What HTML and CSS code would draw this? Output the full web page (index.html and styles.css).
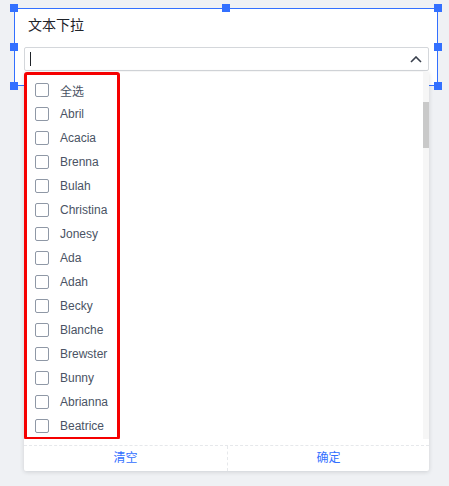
FILE: index.html
```html
<!DOCTYPE html>
<html lang="zh">
<head>
<meta charset="utf-8">
<link rel="stylesheet" href="styles.css">
</head>
<body>
<div class="stage">
  <div class="card">
    <div class="selection">
      <span class="handle h-tl"></span>
      <span class="handle h-tm"></span>
      <span class="handle h-tr"></span>
      <span class="handle h-ml"></span>
      <span class="handle h-mr"></span>
      <span class="handle h-bl"></span>
      <span class="handle h-br"></span>
    </div>
    <div class="title">文本下拉</div>
    <div class="select">
      <div class="input">
        <span class="caret"></span>
        <svg class="chevron" width="12" height="7" viewBox="0 0 12 7"><path d="M1 6 L6 1 L11 6" fill="none" stroke="#39404d" stroke-width="1.6"/></svg>
      </div>
      <div class="dropdown">
        <div class="list">
          <div class="row"><span class="box"></span><span class="label">全选</span></div>
          <div class="row"><span class="box"></span><span class="label">Abril</span></div>
          <div class="row"><span class="box"></span><span class="label">Acacia</span></div>
          <div class="row"><span class="box"></span><span class="label">Brenna</span></div>
          <div class="row"><span class="box"></span><span class="label">Bulah</span></div>
          <div class="row"><span class="box"></span><span class="label">Christina</span></div>
          <div class="row"><span class="box"></span><span class="label">Jonesy</span></div>
          <div class="row"><span class="box"></span><span class="label">Ada</span></div>
          <div class="row"><span class="box"></span><span class="label">Adah</span></div>
          <div class="row"><span class="box"></span><span class="label">Becky</span></div>
          <div class="row"><span class="box"></span><span class="label">Blanche</span></div>
          <div class="row"><span class="box"></span><span class="label">Brewster</span></div>
          <div class="row"><span class="box"></span><span class="label">Bunny</span></div>
          <div class="row"><span class="box"></span><span class="label">Abrianna</span></div>
          <div class="row"><span class="box"></span><span class="label">Beatrice</span></div>
          <div class="highlight"></div>
          <div class="scrollbar"><div class="thumb"></div></div>
        </div>
        <div class="footer">
          <div class="btn">清空</div>
          <div class="btn btn-right">确定</div>
        </div>
      </div>
    </div>
  </div>
</div>
</body>
</html>
```

FILE: styles.css
```css
html, body {
  margin: 0;
  padding: 0;
}
body {
  width: 449px;
  height: 486px;
  background: #eff1f4;
  font-family: "Liberation Sans", Arial, "Noto Sans CJK SC", sans-serif;
  overflow: hidden;
}
.stage {
  padding: 8px 0 0 14px;
}
.card {
  position: relative;
  width: 423px;
  height: 77px;
  background: #ffffff;
  box-sizing: border-box;
}
.selection {
  position: absolute;
  left: 0;
  top: 0;
  width: 424px;
  height: 78px;
  border: 1px solid #3370ff;
  box-sizing: border-box;
  z-index: 1;
}
.handle {
  position: absolute;
  width: 8px;
  height: 8px;
  background: #3370ff;
}
.h-tl { left: -5px; top: -5px; }
.h-tm { left: 207px; top: -5px; }
.h-tr { right: -5px; top: -5px; }
.h-ml { left: -5px; top: 34px; }
.h-mr { right: -5px; top: 34px; }
.h-bl { left: -5px; bottom: -5px; }
.h-br { right: -5px; bottom: -5px; }
.title {
  padding: 7px 0 0 14px;
  font-size: 14px;
  line-height: 20px;
  color: #1f2329;
  height: 20px;
}
.select {
  position: relative;
  margin: 12px 0 0 10px;
  width: 405px;
}
.input {
  position: relative;
  height: 24px;
  border: 1px solid #d4d7db;
  border-radius: 2px;
  box-sizing: border-box;
  background: #fff;
  display: flex;
  align-items: center;
  justify-content: space-between;
  padding: 0 6px 0 5px;
}
.caret {
  width: 1px;
  height: 14px;
  background: #1f2329;
}
.chevron {
  display: block;
  margin-top: 1px;
}
.dropdown {
  position: absolute;
  left: 0;
  top: 25px;
  width: 405px;
  height: 399px;
  background: #ffffff;
  border-radius: 2px;
  box-shadow: 0 1px 4px rgba(31, 35, 41, 0.16);
  z-index: 2;
  display: flex;
  flex-direction: column;
}
.list {
  position: relative;
  height: 368px;
  padding: 6px 0 0 11px;
  box-sizing: border-box;
  overflow: hidden;
}
.row {
  height: 24px;
  display: flex;
  align-items: center;
}
.box {
  width: 14px;
  height: 14px;
  border: 1px solid #8f98a6;
  border-radius: 2px;
  box-sizing: border-box;
  margin-right: 11px;
  flex: none;
}
.label {
  font-size: 12px;
  color: #4a5364;
}
.highlight {
  position: absolute;
  left: 0;
  top: 0;
  width: 96px;
  height: 368px;
  border: 3px solid #f50000;
  border-radius: 3px;
  box-sizing: border-box;
}
.scrollbar {
  position: absolute;
  right: 0;
  top: 0;
  width: 6px;
  height: 368px;
  background: #f6f6f6;
}
.thumb {
  margin-top: 30px;
  height: 46px;
  background: #c9c9c9;
}
.footer {
  margin-top: 6px;
  border-top: 1px dashed #e6e8eb;
  display: grid;
  grid-template-columns: 203px 1fr;
  height: 25px;
}
.btn {
  font-size: 12px;
  line-height: 24px;
  text-align: center;
  color: #3370ff;
}
.btn-right {
  border-left: 1px dashed #e6e8eb;
}
```
